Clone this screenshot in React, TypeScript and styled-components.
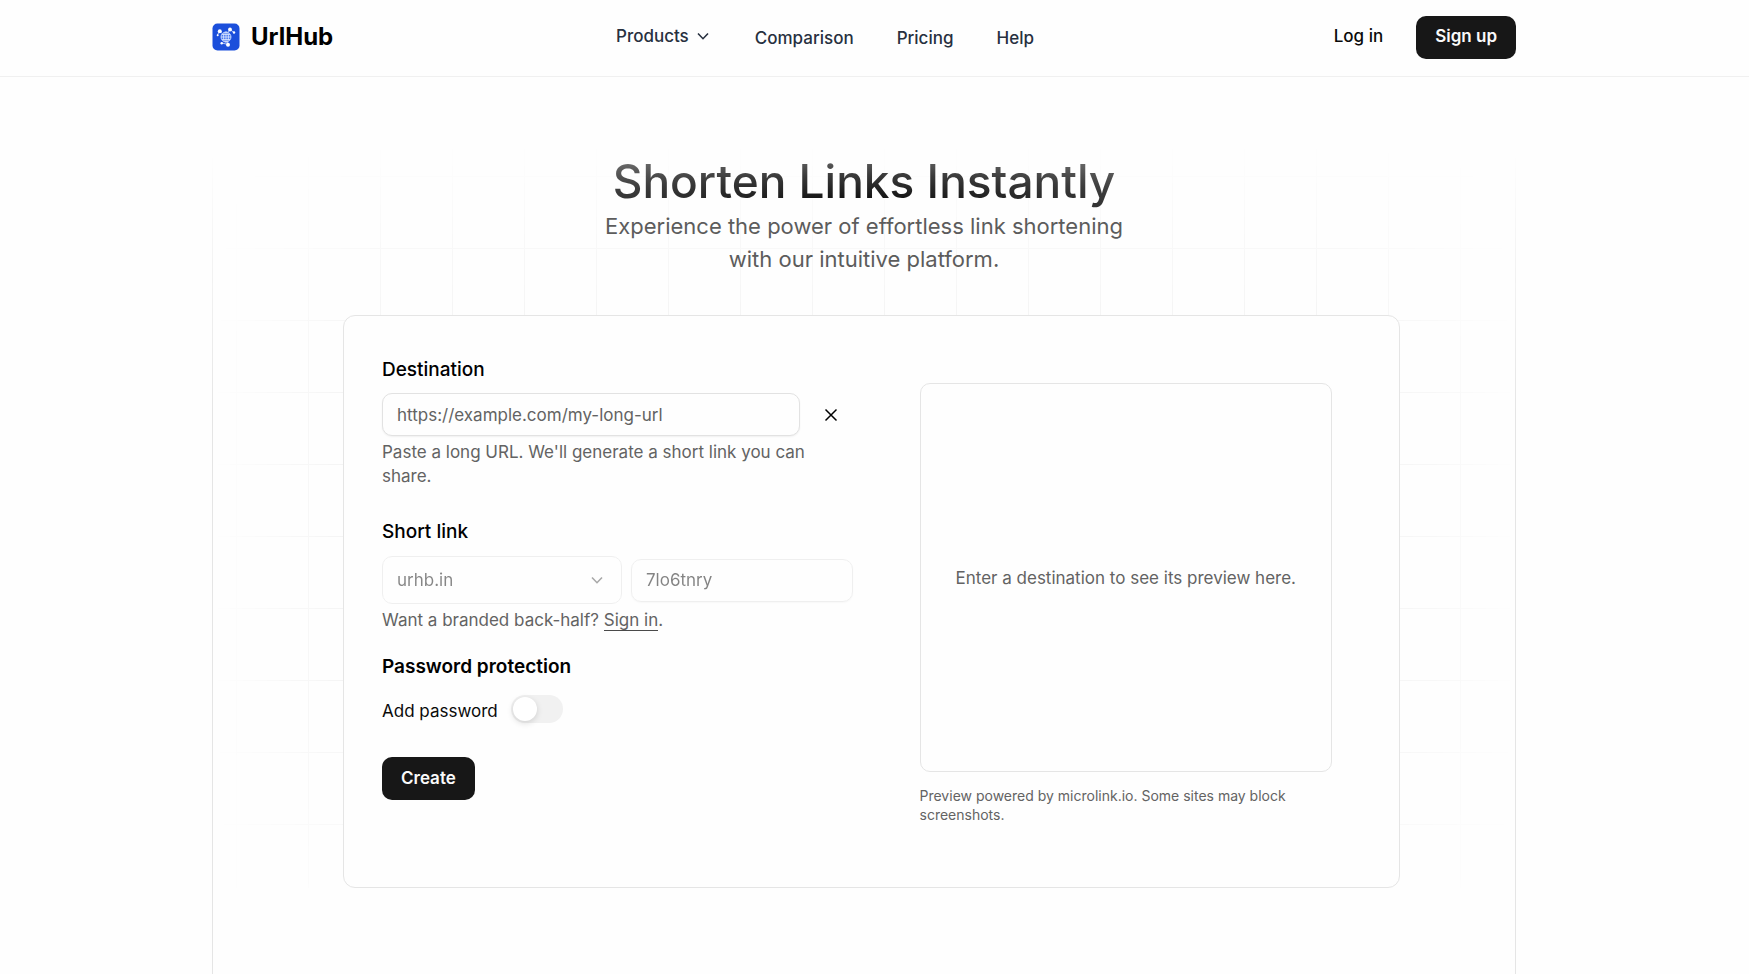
import React, { useState } from 'react';
import styled, { createGlobalStyle, css } from 'styled-components';

const GlobalStyle = createGlobalStyle`
  *, *::before, *::after { box-sizing: border-box; }
  html { background: #fefefe; }
  body {
    margin: 0;
    overflow-x: hidden;
    font-family: Inter, "Liberation Sans", sans-serif;
    font-size: 17px;
    line-height: 24px;
    color: #0a0a0a;
    -webkit-font-smoothing: antialiased;
  }
  button, input, select { font: inherit; color: inherit; }
  a { color: inherit; text-decoration: none; }
`;

const Page = styled.div`
  display: flex;
  flex-direction: column;
  min-height: 100vh;
`;

const Header = styled.header`
  padding-right: 21px;
  border-bottom: 1px solid #f0f0f0;
`;

const HeaderInner = styled.div`
  display: flex;
  align-items: center;
  justify-content: space-between;
  max-width: 1304px;
  height: 76px;
  margin: 0 auto;
  padding-bottom: 2px;
`;

const Brand = styled.a`
  display: flex;
  align-items: center;
  gap: 11px;
  font-size: 24px;
  font-weight: 700;
  color: #000;
`;

const Nav = styled.nav`
  display: flex;
  align-items: baseline;
  gap: 43px;
  padding-left: 2px;
  font-weight: 500;
  color: #27303f;
`;

const NavLink = styled.a`
  padding-top: 2px;
`;

const NavMenuButton = styled.button`
  display: flex;
  align-items: center;
  align-self: flex-start;
  gap: 5px;
  padding: 0;
  border: 0;
  background: none;
  font-weight: 500;
`;

const Auth = styled.div`
  display: flex;
  align-items: center;
  gap: 14px;
`;

const buttonBase = css`
  display: inline-flex;
  align-items: center;
  justify-content: center;
  height: 43px;
  padding: 0 19px 2px;
  border: 0;
  border-radius: 10px;
  font-weight: 500;
`;

const GhostLink = styled.a`
  ${buttonBase}
`;

const primary = css`
  ${buttonBase}
  font-weight: 600;
  background: #171717;
  color: #fafafa;
`;

const PrimaryLink = styled.a`
  ${primary}
`;

const PrimaryButton = styled.button`
  ${primary}
  align-self: flex-start;
`;

const Main = styled.main`
  display: flex;
  flex: 1;
  flex-direction: column;
  padding-right: 21px;
`;

const Hero = styled.section`
  position: relative;
  display: flex;
  flex: 1;
  flex-direction: column;
  align-items: stretch;
  width: 100%;
  max-width: 1304px;
  margin: 0 auto;
  padding: 75px 116px 86px 131px;

  &::before {
    content: '';
    position: absolute;
    inset: 76px 0 0;
    border: solid #e5e5e5;
    border-width: 0 1px;
    mask-image: linear-gradient(to bottom, transparent, #000 260px);
    pointer-events: none;
  }
`;

const GridBackdrop = styled.div`
  position: absolute;
  inset: 64px 0 86px;
  background-image:
    linear-gradient(to right, #f0f0f0 1px, transparent 1px),
    linear-gradient(to bottom, #f0f0f0 1px, transparent 1px);
  background-size: 72px 72px;
  background-position: 24px 35px;
  mask-image:
    linear-gradient(to right, transparent, #000 14%, #000 86%, transparent),
    linear-gradient(to bottom, transparent, #000 34%, #000 72%, rgba(0, 0, 0, 0.3));
  mask-composite: intersect;
  pointer-events: none;
`;

const Intro = styled.div`
  position: relative;
  align-self: center;
  margin-right: 15px;
  margin-bottom: 39px;
  text-align: center;
`;

const Title = styled.h1`
  margin: 0;
  font-size: 46px;
  line-height: 58px;
  font-weight: 500;
  color: transparent;
  background: radial-gradient(ellipse 100% 100% at 50% 90%, #0a0a0a, #3a3a3a 50%, #808080);
  background-clip: text;
`;

const Subtitle = styled.p`
  max-width: 528px;
  margin: 0;
  font-size: 22px;
  line-height: 33px;
  color: #5c5c5c;
`;

const Card = styled.section`
  position: relative;
  display: grid;
  grid-template-columns: 1fr 1fr;
  gap: 38px;
  padding: 38px;
  border: 1px solid #e5e5e5;
  border-radius: 12px;
  background: #fefefe;
`;

const Form = styled.form`
  display: flex;
  flex-direction: column;
  min-width: 0;
`;

const Heading = styled.label`
  align-self: flex-start;
  font-size: 19px;
  line-height: 32px;
  font-weight: 500;
  color: #000;
`;

const SectionTitle = styled.h2`
  margin: 20px 0 13px;
  font-size: 19px;
  line-height: 30px;
  font-weight: 600;
  color: #000;
`;

const DestinationRow = styled.div`
  display: flex;
  gap: 10px;
  margin-top: 7px;
`;

const controlBase = css`
  width: 100%;
  padding: 0 14px;
  border: 1px solid #e2e2e2;
  border-radius: 10px;
  background: #fefefe;
  outline: none;

  &::placeholder { color: #636363; opacity: 1; }
  &:disabled { opacity: 0.5; }
`;

const TextInput = styled.input`
  ${controlBase}
  display: block;
  height: 43px;
  min-width: 0;
  box-shadow: 0 1px 2px rgba(0, 0, 0, 0.06);
`;

const IconButton = styled.button`
  display: flex;
  flex-shrink: 0;
  align-items: center;
  justify-content: center;
  width: 43px;
  height: 43px;
  padding: 0;
  border: 0;
  background: none;
`;

const Hint = styled.p`
  max-width: 440px;
  margin: 4px 0 0;
  color: #636363;
`;

const HintLink = styled.a`
  border-bottom: 1px solid #4a4a4a;
`;

const ShortLinkGroup = styled.div`
  display: flex;
  flex-direction: column;
  margin-top: 28px;
`;

const ShortLinkRow = styled.div`
  display: grid;
  grid-template-columns: 240px 1fr;
  align-items: center;
  gap: 9px;
  margin-top: 8px;
`;

const SelectWrap = styled.div`
  display: grid;
  align-items: center;
  & > * { grid-area: 1 / 1; }
  & > svg { justify-self: end; margin-right: 16px; opacity: 0.35; pointer-events: none; }
`;

const Select = styled.select`
  ${controlBase}
  height: 48px;
  appearance: none;
  color: #111;
`;

const SwitchRow = styled.div`
  display: flex;
  align-items: center;
  gap: 13px;
  margin-bottom: 34px;
`;

const SwitchLabel = styled.label`
  padding-top: 4px;
`;

const Switch = styled.input`
  appearance: none;
  display: flex;
  align-items: center;
  width: 52px;
  height: 28px;
  margin: 0;
  padding: 2px;
  border-radius: 14px;
  background: #f1f1f1;

  &::before {
    content: '';
    width: 24px;
    height: 24px;
    border-radius: 50%;
    background: #fff;
    box-shadow: 0 2px 6px rgba(0, 0, 0, 0.14);
  }
  &:checked { justify-content: flex-end; background: #171717; }
`;

const Preview = styled.figure`
  min-width: 0;
  margin: 0;
  padding: 29px 29px 25px;
`;

const PreviewFrame = styled.div`
  display: flex;
  align-items: center;
  justify-content: center;
  height: 389px;
  border: 1px solid #e5e5e5;
  border-radius: 10px;
  color: #636363;
`;

const Caption = styled.figcaption`
  margin-top: 14px;
  font-size: 14px;
  line-height: 19px;
  color: #636363;
`;

const Chevron = () => (
  <svg width="18" height="18" viewBox="0 0 18 18" fill="none" aria-hidden="true">
    <path d="M4 6.500 9 11.700l5-5.200" stroke="currentColor" strokeWidth="1.6" />
  </svg>
);

const Cross = () => (
  <svg width="18" height="18" viewBox="0 0 18 18" fill="none" aria-hidden="true">
    <path d="m3.500 3.500 11 11m0-11-11 11" stroke="#000" strokeWidth="1.500" />
  </svg>
);

const Logo = () => (
  <svg width="28" height="28" viewBox="0 0 28 28" aria-hidden="true">
    <rect x="0.5" y="0.5" width="27" height="27" rx="5" fill="#1b4fdb" />
    <g stroke="#dce7ff" strokeWidth="0.8" fill="none">
      <path d="M7.500 8 10 10.500M18 6.500l-2 3M18 6.500l4 3M7.500 8 5.500 12M16 21.500 10 20M16 21.500 15.500 18" />
      <circle cx="14" cy="14" r="5" fill="#4b7af0" />
      <path d="M9 14h10M10 11.500h8M10 16.500h8M14 9v10" />
      <ellipse cx="14" cy="14" rx="2.500" ry="5" />
    </g>
    <g fill="#fff">
      <circle cx="7.800" cy="8.300" r="2" />
      <circle cx="18" cy="6.500" r="1.900" />
      <circle cx="22" cy="9.500" r="1.200" />
      <circle cx="5.700" cy="12.200" r="1" />
      <circle cx="16" cy="21.700" r="2" />
      <circle cx="9.700" cy="20.300" r="1.200" />
    </g>
  </svg>
);

export default function App() {
  const [destination, setDestination] = useState('');
  const [protectedLink, setProtectedLink] = useState(false);

  return (
    <Page>
      <GlobalStyle />
      <Header>
        <HeaderInner>
          <Brand href="#"><Logo />UrlHub</Brand>
          <Nav aria-label="Main">
            <NavMenuButton type="button" aria-haspopup="menu">Products <Chevron /></NavMenuButton>
            <NavLink href="#comparison">Comparison</NavLink>
            <NavLink href="#pricing">Pricing</NavLink>
            <NavLink href="#help">Help</NavLink>
          </Nav>
          <Auth>
            <GhostLink href="#login">Log in</GhostLink>
            <PrimaryLink href="#signup">Sign up</PrimaryLink>
          </Auth>
        </HeaderInner>
      </Header>
      <Main>
        <Hero>
          <GridBackdrop />
          <Intro>
            <Title>Shorten Links Instantly</Title>
            <Subtitle>Experience the power of effortless link shortening with our intuitive platform.</Subtitle>
          </Intro>
          <Card>
            <Form onSubmit={(e) => e.preventDefault()}>
              <Heading htmlFor="destination">Destination</Heading>
              <DestinationRow>
                <TextInput
                  id="destination"
                  placeholder="https://example.com/my-long-url"
                  value={destination}
                  onChange={(e) => setDestination(e.target.value)}
                />
                <IconButton type="button" aria-label="Clear" onClick={() => setDestination('')}><Cross /></IconButton>
              </DestinationRow>
              <Hint>Paste a long URL. We'll generate a short link you can share.</Hint>
              <ShortLinkGroup>
                <Heading htmlFor="domain">Short link</Heading>
                <ShortLinkRow>
                  <SelectWrap>
                    <Select id="domain" disabled><option>urhb.in</option></Select>
                    <Chevron />
                  </SelectWrap>
                  <TextInput aria-label="Back-half" defaultValue="7lo6tnry" disabled />
                </ShortLinkRow>
                <Hint>Want a branded back-half? <HintLink href="#signin">Sign in</HintLink>.</Hint>
              </ShortLinkGroup>
              <SectionTitle>Password protection</SectionTitle>
              <SwitchRow>
                <SwitchLabel htmlFor="password">Add password</SwitchLabel>
                <Switch
                  id="password"
                  type="checkbox"
                  role="switch"
                  checked={protectedLink}
                  onChange={(e) => setProtectedLink(e.target.checked)}
                />
              </SwitchRow>
              <PrimaryButton type="submit">Create</PrimaryButton>
            </Form>
            <Preview>
              <PreviewFrame>Enter a destination to see its preview here.</PreviewFrame>
              <Caption>Preview powered by microlink.io. Some sites may block screenshots.</Caption>
            </Preview>
          </Card>
        </Hero>
      </Main>
    </Page>
  );
}
